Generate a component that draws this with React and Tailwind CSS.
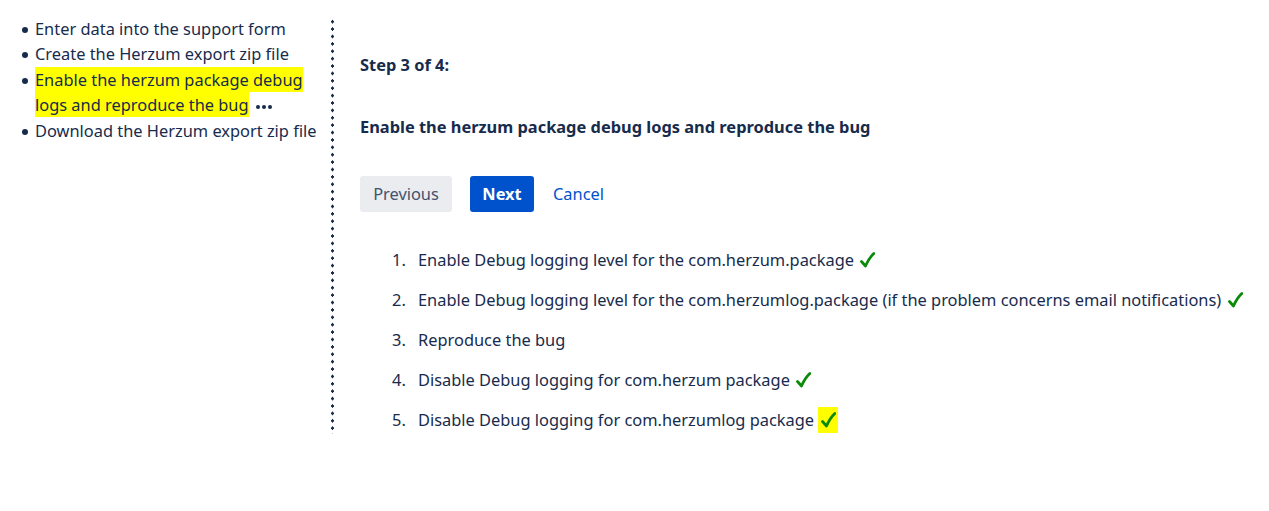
import React from 'react';

const steps = [
    { text: 'Enable Debug logging level for the com.herzum.package', done: true },
    { text: 'Enable Debug logging level for the com.herzumlog.package (if the problem concerns email notifications)', done: true },
    { text: 'Reproduce the bug', done: false },
    { text: 'Disable Debug logging for com.herzum package', done: true },
    { text: 'Disable Debug logging for com.herzumlog package', done: true, mark: true },
];

function Check({ mark }) {
    return (
        <span className={"inline-flex items-center justify-center align-middle ml-[4px] w-[20px] h-[26px] -mt-[3px] " + (mark ? 'bg-[#ffff00]' : '')}>
            <svg width="15" height="16" viewBox="0 0 15 16">
                <path d="M1.5 9.5 L5.5 14 Q9 6 13.8 1.5" fill="none" stroke="#0a8a0a" strokeWidth="2.8" strokeLinecap="round" strokeLinejoin="round" />
            </svg>
        </span>
    );
}

function Bullet() {
    return (
        <span className="w-[15px] shrink-0 flex items-start pt-[11px] pl-[2px]">
            <span className="block w-[6px] h-[6px] rounded-full bg-[#172b4d]"></span>
        </span>
    );
}

export default function App() {
    return (
        <div className="flex bg-white text-[#172b4d] text-[16.4px] font-['Noto_Sans',sans-serif] h-[511px] pt-[17px]">
            {/* left nav */}
            <div className="w-[331px] shrink-0 pl-[20px]">
                <ul className="leading-[25.4px] -mt-[1px]">
                    <li className="flex"><Bullet /><span>Enter data into the support form</span></li>
                    <li className="flex"><Bullet /><span>Create the Herzum export zip file</span></li>
                    <li className="flex">
                        <Bullet />
                        <span>
                            <span className="bg-[#ffff00] py-[1px]">Enable the herzum package debug logs and reproduce the bug</span>
                            <span className="inline-flex gap-[2px] ml-[7px] align-middle">
                                <span className="w-[4px] h-[4px] rounded-full bg-[#172b4d]"></span>
                                <span className="w-[4px] h-[4px] rounded-full bg-[#172b4d]"></span>
                                <span className="w-[4px] h-[4px] rounded-full bg-[#172b4d]"></span>
                            </span>
                        </span>
                    </li>
                    <li className="flex"><Bullet /><span>Download the Herzum export zip file</span></li>
                </ul>
            </div>

            {/* divider */}
            <div className="w-[3px] shrink-0 h-[416px] mt-[1px] bg-[radial-gradient(circle,#172b4d_1.4px,transparent_1.6px)] bg-[length:3px_7.4px]"></div>

            {/* step content */}
            <div className="pl-[26px] pt-[36px]">
                <h2 className="font-bold leading-[24px]">Step 3 of 4:</h2>
                <h3 className="font-bold leading-[24px] mt-[38px]">Enable the herzum package debug logs and reproduce the bug</h3>
                <div className="flex items-center mt-[37px]">
                    <button className="h-[36px] w-[92px] rounded-[3px] bg-[#ebecf0] text-[#42526e]">Previous</button>
                    <button className="h-[36px] w-[64px] ml-[18px] rounded-[3px] bg-[#0052cc] text-white font-bold">Next</button>
                    <button className="h-[36px] ml-[19px] text-[#0052cc]">Cancel</button>
                </div>
                <ol className="mt-[35px] pl-[32px]">
                    {steps.map((s, i) => (
                        <li key={i} className="flex leading-[26px] mb-[14px]">
                            <span className="w-[26px] shrink-0">{i + 1}.</span>
                            <span>{s.text}{s.done && <Check mark={s.mark} />}</span>
                        </li>
                    ))}
                </ol>
            </div>
        </div>
    );
}
